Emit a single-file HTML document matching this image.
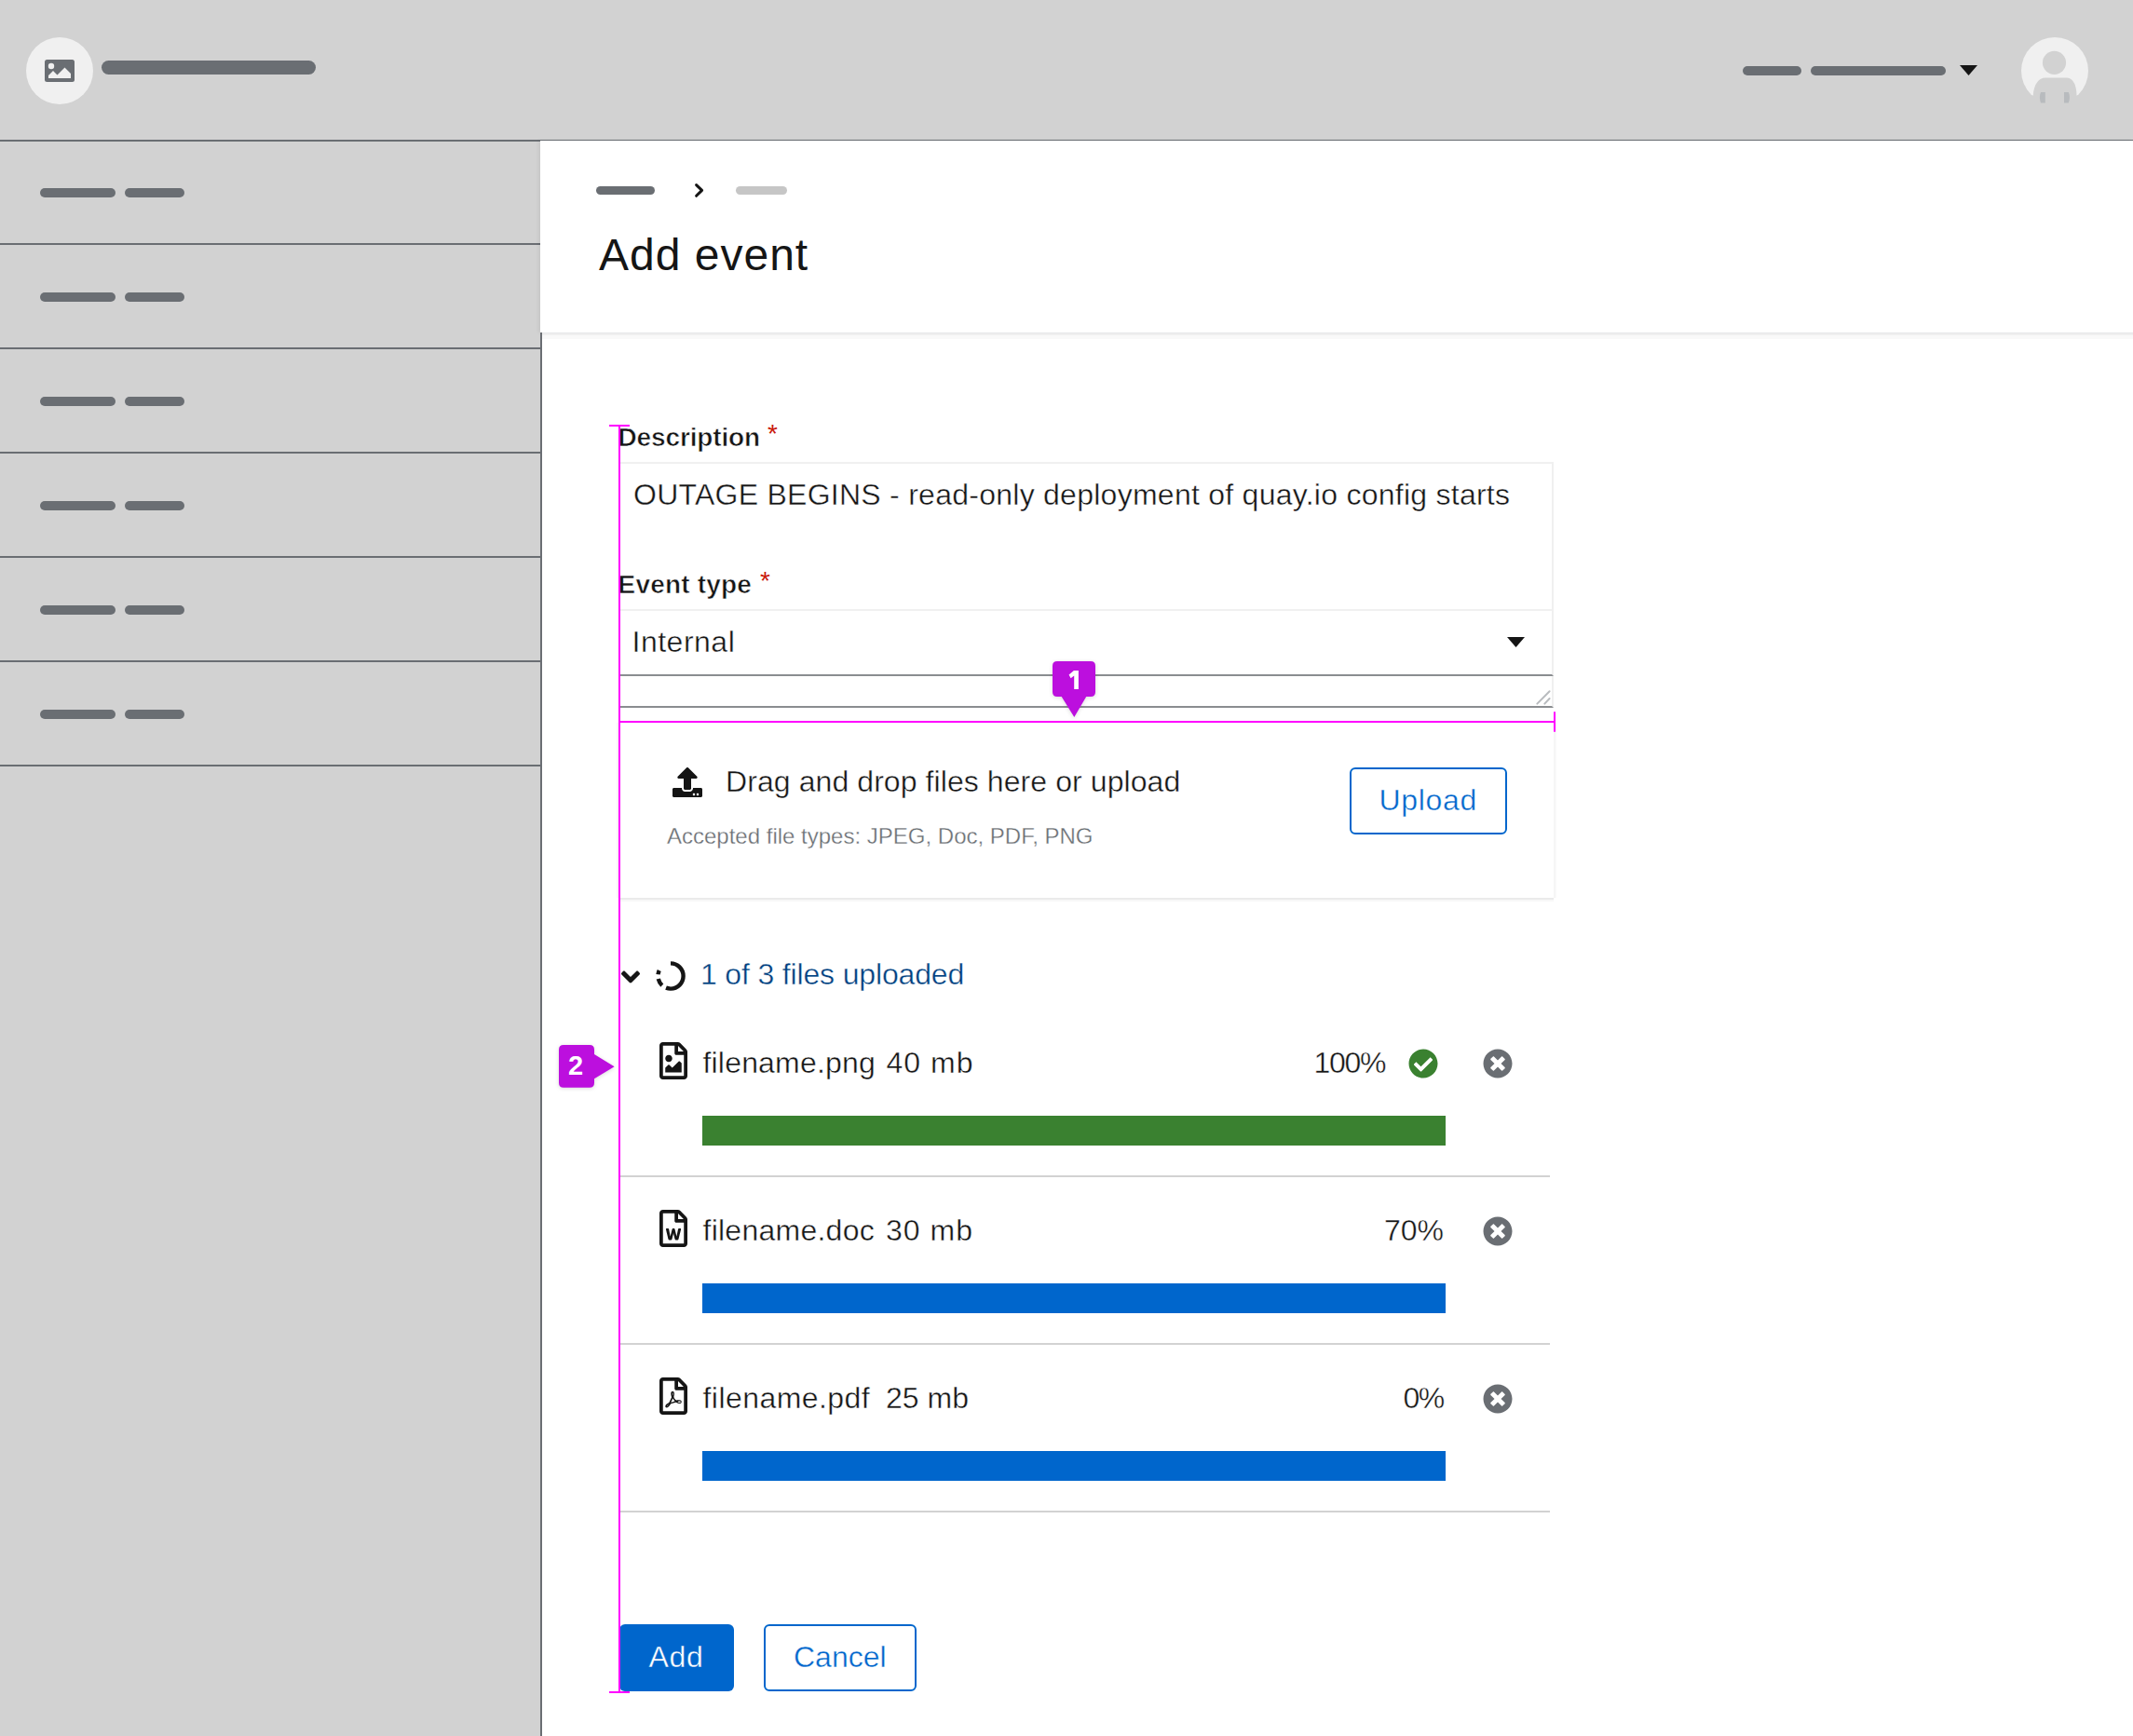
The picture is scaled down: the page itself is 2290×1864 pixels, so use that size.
<!DOCTYPE html>
<html><head><meta charset="utf-8">
<style>
html,body{margin:0;padding:0;}
body{width:2290px;height:1864px;position:relative;overflow:hidden;background:#fff;font-family:"Liberation Sans",sans-serif;color:#151515;}
.a{position:absolute;}
.bar{position:absolute;background:#6a6e73;}
.t{position:absolute;white-space:pre;line-height:1;}
.sep{position:absolute;left:0;width:580px;height:2px;background:#6a6e73;}
svg{position:absolute;overflow:visible;}
.mg{position:absolute;background:#ff00ff;}
.sw{-webkit-text-stroke:0.4px #fff;}
.sb{-webkit-text-stroke:0.6px #fff;}
</style></head><body>
<!-- masthead -->
<div class="a" style="left:0;top:0;width:2290px;height:150px;background:#d2d2d2;"></div>
<div class="a" style="left:0;top:150px;width:2290px;height:2px;background:#6a6e73;"></div>
<div class="a" style="left:28px;top:40px;width:72px;height:72px;border-radius:50%;background:#f0f0f0;"></div>
<svg style="left:48px;top:64px" width="32" height="24" viewBox="0 0 32 24"><rect x="0" y="0" width="32" height="24" rx="2.5" fill="#6a6e73"/><circle cx="7" cy="7" r="3.2" fill="#f0f0f0"/><path d="M4 20 L4 17 L9 12 L13.5 16.5 L21.5 8.5 L28 15 L28 20 Z" fill="#f0f0f0"/></svg>
<div class="bar" style="left:109px;top:65px;width:230px;height:15px;border-radius:8px;"></div>
<div class="bar" style="left:1871px;top:71px;width:63px;height:10px;border-radius:5px;"></div>
<div class="bar" style="left:1944px;top:71px;width:145px;height:10px;border-radius:5px;"></div>
<svg style="left:2104px;top:70px" width="19" height="11" viewBox="0 0 19 11"><path d="M0 0 H19 L9.5 11 Z" fill="#151515"/></svg>
<svg style="left:2170px;top:40px" width="72" height="72" viewBox="0 0 72 72"><defs><clipPath id="avc"><circle cx="36" cy="36" r="36"/></clipPath></defs><circle cx="36" cy="36" r="36" fill="#f0f0f0"/><circle cx="35.5" cy="27.3" r="12.6" fill="#d2d2d2"/><path d="M11 80 V62.6 H12.8 C13.5 50 19 43.4 26 43.4 H48.6 C55 43.4 59.5 50 59.5 62.6 H61 V80 Z" fill="#d2d2d2"/><path d="M21 59 C19.5 62 19.5 67 21 70.4 H25.8 V59 Z" fill="#b8bbbe"/><path d="M46 59 V70.4 H50.8 C52.3 67 52.3 62 50.8 59 Z" fill="#b8bbbe"/></svg>

<!-- sidebar -->
<div class="a" style="left:0;top:152px;width:580px;height:1712px;background:#d2d2d2;"></div>
<div class="sep" style="top:261px"></div>
<div class="sep" style="top:373px"></div>
<div class="sep" style="top:485px"></div>
<div class="sep" style="top:597px"></div>
<div class="sep" style="top:709px"></div>
<div class="sep" style="top:821px"></div>
<div class="bar" style="left:43px;top:202px;width:81px;height:10px;border-radius:5px;"></div>
<div class="bar" style="left:134px;top:202px;width:64px;height:10px;border-radius:5px;"></div>
<div class="bar" style="left:43px;top:314px;width:81px;height:10px;border-radius:5px;"></div>
<div class="bar" style="left:134px;top:314px;width:64px;height:10px;border-radius:5px;"></div>
<div class="bar" style="left:43px;top:426px;width:81px;height:10px;border-radius:5px;"></div>
<div class="bar" style="left:134px;top:426px;width:64px;height:10px;border-radius:5px;"></div>
<div class="bar" style="left:43px;top:538px;width:81px;height:10px;border-radius:5px;"></div>
<div class="bar" style="left:134px;top:538px;width:64px;height:10px;border-radius:5px;"></div>
<div class="bar" style="left:43px;top:650px;width:81px;height:10px;border-radius:5px;"></div>
<div class="bar" style="left:134px;top:650px;width:64px;height:10px;border-radius:5px;"></div>
<div class="bar" style="left:43px;top:762px;width:81px;height:10px;border-radius:5px;"></div>
<div class="bar" style="left:134px;top:762px;width:64px;height:10px;border-radius:5px;"></div>

<!-- page header -->
<div class="a" style="left:580px;top:151px;width:1710px;height:206px;background:#fff;box-shadow:0 1px 0 #e6e7e8,0 3px 0 #efefef,0 7px 0 #f9f9f9,-2px 0 4px rgba(0,0,0,0.06);"></div>
<div class="a" style="left:580px;top:357px;width:2px;height:1507px;background:#6a6e73;"></div>
<div class="bar" style="left:640px;top:200px;width:63px;height:9px;border-radius:5px;"></div>
<svg style="left:740px;top:190px" width="20" height="30" viewBox="0 0 20 30"><polyline points="7.6,8.6 13.6,14.4 7.6,20.3" fill="none" stroke="#151515" stroke-width="3" stroke-linecap="round" stroke-linejoin="round"/></svg>
<div class="bar" style="left:790px;top:200px;width:55px;height:9px;border-radius:5px;background:#c6c6c6;"></div>
<div class="t" style="left:643px;top:250px;font-size:48px;letter-spacing:1px;">Add event</div>

<!-- form: description textarea -->
<div class="a" style="left:664px;top:496px;width:1004px;height:264px;box-sizing:border-box;border:2px solid #f0f0f0;border-bottom:2px solid #8a8d90;background:#fff;"></div>
<svg style="left:1640px;top:730px" width="30" height="30" viewBox="0 0 30 30"><line x1="10.3" y1="25.6" x2="23.6" y2="12.2" stroke="#b8bbbe" stroke-width="2" stroke-linecap="round"/><line x1="18.3" y1="25.6" x2="23.6" y2="20" stroke="#b8bbbe" stroke-width="2" stroke-linecap="round"/></svg>
<div class="t sb" style="left:663.5px;top:455.5px;font-size:28px;font-weight:bold;letter-spacing:-0.14px;">Description</div>
<div class="t" style="left:824px;top:452px;font-size:28px;color:#c9190b;">*</div>
<div class="t sw" style="left:680px;top:515px;font-size:32px;letter-spacing:0.26px;">OUTAGE BEGINS - read-only deployment of quay.io config starts</div>
<div class="t sb" style="left:663.5px;top:613.5px;font-size:28px;font-weight:bold;letter-spacing:0.2px;">Event type</div>
<div class="t" style="left:816px;top:610px;font-size:28px;color:#c9190b;">*</div>
<!-- select -->
<div class="a" style="left:664px;top:654px;width:1004px;height:72px;box-sizing:border-box;border-top:2px solid #f0f0f0;border-right:2px solid #f0f0f0;border-bottom:2px solid #8a8d90;background:#fff;"></div>
<div class="t sw" style="left:678.5px;top:673px;font-size:32px;letter-spacing:0.5px;">Internal</div>
<svg style="left:1618px;top:684px" width="19" height="11" viewBox="0 0 19 11"><path d="M0 0 H19 L9.5 11 Z" fill="#151515"/></svg>

<!-- drop zone -->
<div class="a" style="left:664px;top:776px;width:1004px;height:188px;background:#fff;box-shadow:0 2px 0 0 #ebebeb,2.5px 0 0 0 #f6f6f6,0 4px 0 0 #f8f8f8,-2px 0 0 0 #f8f8f8;"></div>
<svg style="left:722px;top:824px" width="32" height="32" viewBox="0 0 512 512"><path fill="#151515" d="M296 384h-80c-13.3 0-24-10.7-24-24V192h-87.7c-17.8 0-26.7-21.5-14.1-34.1L242.3 5.7c7.5-7.5 19.8-7.5 27.3 0l152.2 152.2c12.6 12.6 3.7 34.1-14.1 34.1H320v168c0 13.3-10.7 24-24 24zm216-8v112c0 13.3-10.7 24-24 24H24c-13.3 0-24-10.7-24-24V376c0-13.3 10.7-24 24-24h136v8c0 30.9 25.1 56 56 56h80c30.9 0 56-25.1 56-56v-8h136c13.3 0 24 10.7 24 24zm-124 88c0-11-9-20-20-20s-20 9-20 20 9 20 20 20 20-9 20-20zm64 0c0-11-9-20-20-20s-20 9-20 20 9 20 20 20 20-9 20-20z"/></svg>
<div class="t sw" style="left:779px;top:823.3px;font-size:32px;letter-spacing:0.08px;">Drag and drop files here or upload</div>
<div class="t" style="-webkit-text-stroke:0.3px #fff;left:716px;top:885.8px;font-size:24px;color:#6a6e73;">Accepted file types: JPEG, Doc, PDF, PNG</div>
<div class="a" style="left:1449px;top:824px;width:169px;height:72px;box-sizing:border-box;border:2px solid #0066cc;border-radius:6px;"></div>
<div class="t sw" style="left:1480.5px;top:843.1px;font-size:32px;color:#0066cc;letter-spacing:0.7px;">Upload</div>

<!-- progress -->
<svg style="left:661px;top:1032.7px" width="32" height="32" viewBox="0 0 320 512"><path fill="#151515" d="M143 352.3L7 216.3c-9.4-9.4-9.4-24.6 0-33.9l22.6-22.6c9.4-9.4 24.6-9.4 33.9 0l96.4 96.4 96.4-96.4c9.4-9.4 24.6-9.4 33.9 0l22.6 22.6c9.4 9.4 9.4 24.6 0 33.9l-136 136c-9.2 9.4-24.4 9.4-33.8 0z"/></svg>
<svg style="left:700px;top:1028px" width="40" height="40" viewBox="0 0 40 40"><circle cx="20" cy="20" r="13.6" fill="none" stroke="#151515" stroke-width="4.4" stroke-dasharray="47.5 5 8 5 4.3 100" stroke-dashoffset="0" transform="rotate(-90 20 20)"/></svg>
<div class="t sw" style="left:752px;top:1030.3px;font-size:32px;color:#004080;letter-spacing:-0.16px;">1 of 3 files uploaded</div>

<!-- row 1 -->
<svg style="left:708px;top:1119px" width="30" height="40" viewBox="0 0 384 512"><path fill="#151515" d="M369.9 97.9L286 14C277 5 264.8-.1 252.1-.1H48C21.5 0 0 21.5 0 48v416c0 26.5 21.5 48 48 48h288c26.5 0 48-21.5 48-48V131.9c0-12.7-5.1-25-14.1-34zM332.1 128H256V51.9l76.1 76.1zM48 464V48h160v104c0 13.3 10.7 24 24 24h104v288H48zm32-48h224V288l-23.5-23.5c-4.7-4.7-12.3-4.7-17 0L176 352l-39.5-39.5c-4.7-4.7-12.3-4.7-17 0L80 352v64zm48-240c-26.5 0-48 21.5-48 48s21.5 48 48 48 48-21.5 48-48-21.5-48-48-48z"/></svg>
<div class="t sw" style="left:754.5px;top:1124.9px;font-size:32px;letter-spacing:0.18px;">filename.png</div>
<div class="t sw" style="left:951.5px;top:1124.9px;font-size:32px;letter-spacing:1px;">40 mb</div>
<div class="t sw" style="left:1410.5px;top:1125.4px;font-size:32px;letter-spacing:-1.3px;">100%</div>
<svg style="left:1511.5px;top:1125.5px" width="32" height="32" viewBox="0 0 512 512"><path fill="#3a8130" d="M504 256c0 136.967-111.033 248-248 248S8 392.967 8 256 119.033 8 256 8s248 111.033 248 248zM227.314 387.314l184-184c6.248-6.248 6.248-16.379 0-22.627l-22.627-22.627c-6.248-6.249-16.379-6.249-22.628 0L216 308.118l-70.059-70.059c-6.248-6.248-16.379-6.248-22.628 0l-22.627 22.627c-6.248 6.248-6.248 16.379 0 22.627l104 104c6.249 6.249 16.379 6.249 22.628.001z"/></svg>
<svg style="left:1591.5px;top:1125.5px" width="32" height="32" viewBox="0 0 512 512"><path fill="#6a6e73" d="M256 8C119 8 8 119 8 256s111 248 248 248 248-111 248-248S393 8 256 8zm121.6 313.1c4.7 4.7 4.7 12.3 0 17L338 377.6c-4.7 4.7-12.3 4.7-17 0L256 312l-65.1 65.6c-4.7 4.7-12.3 4.7-17 0L134.4 338c-4.7-4.7-4.7-12.3 0-17l65.6-65-65.6-65.1c-4.7-4.7-4.7-12.3 0-17l39.6-39.6c4.7-4.7 12.3-4.7 17 0l65 65.7 65.1-65.6c4.7-4.7 12.3-4.7 17 0l39.6 39.6c4.7 4.7 4.7 12.3 0 17L312 256l65.6 65.1z"/></svg>
<div class="a" style="left:754px;top:1198px;width:798px;height:32px;background:#3a8130;"></div>
<div class="a" style="left:666px;top:1262px;width:998px;height:2px;background:#d2d2d2;"></div>

<!-- row 2 -->
<svg style="left:708px;top:1299px" width="30" height="40" viewBox="0 0 384 512"><path fill="#151515" d="M369.9 97.9L286 14C277 5 264.8-.1 252.1-.1H48C21.5 0 0 21.5 0 48v416c0 26.5 21.5 48 48 48h288c26.5 0 48-21.5 48-48V131.9c0-12.7-5.1-25-14.1-34zM332.1 128H256V51.9l76.1 76.1zM48 464V48h160v104c0 13.3 10.7 24 24 24h104v288H48zm220.1-208c-5.7 0-10.6 4-11.7 9.5-20.6 97.7-20.4 95.4-21 103.5-.2-1.2-.4-2.6-.7-4.3-.8-5.100.3.2-23.6-99.5-1.3-5.4-6.1-9.2-11.7-9.2h-13.3c-5.5 0-10.3 3.8-11.7 9.1-24.4 99-24 96.2-24.800 103.7-.1-1.1-.2-2.5-.5-4.2-.7-5.2-14.1-73.3-19.1-99-1.1-5.6-6-9.7-11.8-9.7h-16.8c-7.8 0-13.5 7.3-11.7 14.8 8 32.6 26.7 109.5 33.2 136 1.3 5.4 6.100 9.1 11.7 9.1h25.2c5.5 0 10.3-3.7 11.6-9.1l17.9-71.4c1.5-6.2 2.5-12 3-17.3l2.9 17.3c.1.4 12.6 50.5 17.9 71.4 1.3 5.3 6.1 9.1 11.6 9.1h24.7c5.5 0 10.3-3.7 11.6-9.1 20.8-81.9 30.2-119 34.5-136 1.9-7.6-3.8-14.9-11.6-14.9h-15.8z"/></svg>
<div class="t sw" style="left:754.5px;top:1305.4px;font-size:32px;letter-spacing:0.25px;">filename.doc</div>
<div class="t sw" style="left:951px;top:1305.4px;font-size:32px;letter-spacing:1px;">30 mb</div>
<div class="t sw" style="left:1486px;top:1304.7px;font-size:32px;">70%</div>
<svg style="left:1591.5px;top:1305.5px" width="32" height="32" viewBox="0 0 512 512"><path fill="#6a6e73" d="M256 8C119 8 8 119 8 256s111 248 248 248 248-111 248-248S393 8 256 8zm121.6 313.1c4.7 4.7 4.7 12.3 0 17L338 377.6c-4.7 4.7-12.3 4.7-17 0L256 312l-65.1 65.6c-4.7 4.7-12.3 4.7-17 0L134.4 338c-4.7-4.7-4.7-12.3 0-17l65.6-65-65.6-65.1c-4.7-4.7-4.7-12.3 0-17l39.6-39.6c4.7-4.7 12.3-4.7 17 0l65 65.7 65.1-65.6c4.7-4.7 12.3-4.7 17 0l39.6 39.6c4.7 4.7 4.7 12.3 0 17L312 256l65.6 65.1z"/></svg>
<div class="a" style="left:754px;top:1378px;width:798px;height:32px;background:#0066cc;"></div>
<div class="a" style="left:666px;top:1442px;width:998px;height:2px;background:#d2d2d2;"></div>

<!-- row 3 -->
<svg style="left:708px;top:1479px" width="30" height="40" viewBox="0 0 384 512"><path fill="#151515" fill-rule="evenodd" d="M369.9 97.9L286 14C277 5 264.8-.1 252.1-.1H48C21.5 0 0 21.5 0 48v416c0 26.5 21.5 48 48 48h288c26.5 0 48-21.5 48-48V131.9c0-12.7-5.1-25-14.1-34zM332.1 128H256V51.9l76.1 76.1zM48 464V48h160v104c0 13.3 10.7 24 24 24h104v288H48zm250.2-143.7c-12.2-12-47-8.7-64.4-6.5-17.2-10.5-28.7-25-36.8-46.3 3.900-16.1 10.1-40.6 5.4-56-4.2-26.2-37.8-23.6-42.6-5.9-4.4 16.1-.4 38.5 7 67.1-10 23.9-24.9 56-35.4 74.4-20 10.3-47 26.2-51 46.200-3.3 15.8 26 55.2 76.1-31.2 22.4-7.4 46.8-16.5 68.4-20.1 18.9 10.2 41 17 55.8 17 25.5 0 28-28.2 17.5-38.7zm-198.1 77.8c5.1-13.7 24.5-29.5 30.4-35-19 30.3-30.4 35.7-30.4 35zm81.6-190.6c7.4 0 6.7 32.1 1.8 40.8-4.4-13.9-4.3-40.8-1.8-40.8zm-24.4 136.6c9.7-16.9 18-37 24.7-54.7 8.3 15.1 18.9 27.2 30.1 35.5-20.8 4.3-38.9 13.1-54.800 19.2zM252 336a21 8.5 0 1 0 42 0a21 8.5 0 1 0 -42 0z"/></svg>
<div class="t sw" style="left:754.5px;top:1485.3px;font-size:32px;letter-spacing:0.44px;">filename.pdf</div>
<div class="t sw" style="left:951px;top:1485.3px;font-size:32px;">25 mb</div>
<div class="t sw" style="left:1506.5px;top:1484.7px;font-size:32px;letter-spacing:-1.5px;">0%</div>
<svg style="left:1591.5px;top:1485.5px" width="32" height="32" viewBox="0 0 512 512"><path fill="#6a6e73" d="M256 8C119 8 8 119 8 256s111 248 248 248 248-111 248-248S393 8 256 8zm121.6 313.1c4.7 4.7 4.7 12.3 0 17L338 377.6c-4.7 4.7-12.3 4.7-17 0L256 312l-65.1 65.6c-4.7 4.7-12.3 4.7-17 0L134.4 338c-4.7-4.7-4.7-12.3 0-17l65.6-65-65.6-65.1c-4.7-4.7-4.7-12.3 0-17l39.6-39.6c4.7-4.7 12.3-4.7 17 0l65 65.7 65.1-65.6c4.7-4.7 12.3-4.7 17 0l39.6 39.6c4.7 4.7 4.7 12.3 0 17L312 256l65.6 65.1z"/></svg>
<div class="a" style="left:754px;top:1558px;width:798px;height:32px;background:#0066cc;"></div>
<div class="a" style="left:666px;top:1622px;width:998px;height:2px;background:#d2d2d2;"></div>

<!-- buttons -->
<div class="a" style="left:665px;top:1744px;width:123px;height:72px;border-radius:6px;background:#0066cc;"></div>
<div class="t" style="-webkit-text-stroke:0.4px #0066cc;left:696.5px;top:1762.6px;font-size:32px;color:#fff;letter-spacing:0.7px;">Add</div>
<div class="a" style="left:820px;top:1744px;width:164px;height:72px;box-sizing:border-box;border:2px solid #0066cc;border-radius:6px;"></div>
<div class="t sw" style="left:852px;top:1762.6px;font-size:32px;color:#0066cc;">Cancel</div>

<!-- annotations -->
<div class="mg" style="left:664px;top:456px;width:2px;height:1362px;"></div>
<div class="mg" style="left:654px;top:456px;width:22px;height:2px;"></div>
<div class="mg" style="left:654px;top:1816px;width:22px;height:2px;"></div>
<div class="mg" style="left:664px;top:774px;width:1006px;height:2px;"></div>
<div class="mg" style="left:1668px;top:764px;width:2px;height:22px;border-radius:1px;"></div>
<svg style="left:1125px;top:705px" width="60" height="70" viewBox="0 0 60 70"><path d="M10 5 H46 Q51 5 51 10 V38 Q51 43 46 43 H41.2 L28.3 65 L14.7 43 H10 Q5 43 5 38 V10 Q5 5 10 5 Z" fill="#bc0fde" style="filter:drop-shadow(0 1px 2px rgba(0,0,0,0.15))"/><path d="M27.9 15 H32.9 V35.1 H28.2 V20.6 L24.6 23.2 L22.6 19.6 Z" fill="#fff"/></svg>
<svg style="left:595px;top:1117px" width="70" height="60" viewBox="0 0 70 60"><path d="M10 5 H38 Q43 5 43 10 V15 L64.6 28.3 L43 41.2 V45.7 Q43 50.7 38 50.7 H10 Q5 50.7 5 45.7 V10 Q5 5 10 5 Z" fill="#bc0fde" style="filter:drop-shadow(0 1px 2px rgba(0,0,0,0.15))"/><text x="23" y="37" style="font-family:'Liberation Sans';font-weight:bold;font-size:29px" fill="#fff" text-anchor="middle">2</text></svg>
</body></html>
